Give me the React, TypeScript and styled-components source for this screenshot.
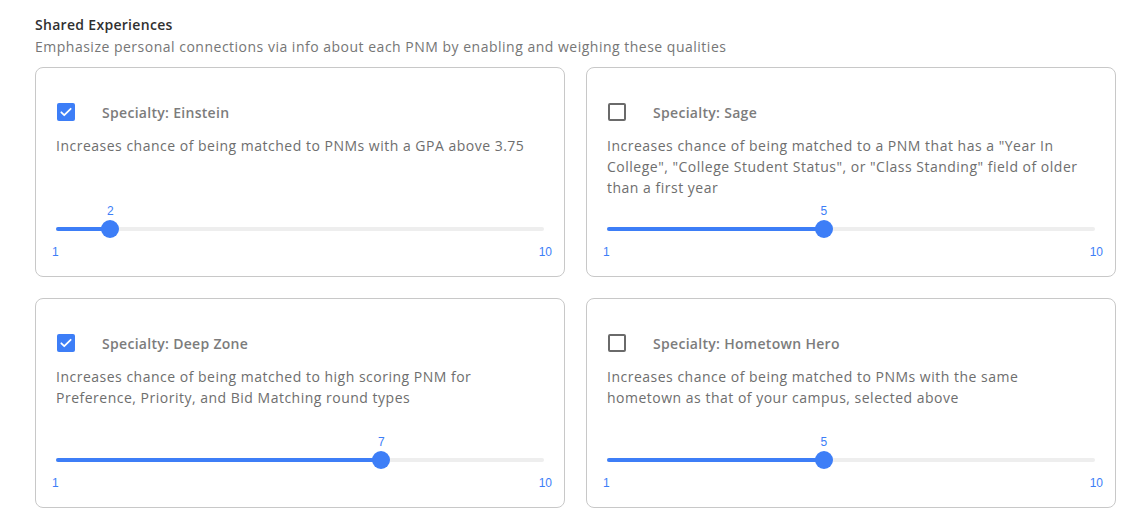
import React from "react";
import styled, { createGlobalStyle } from "styled-components";

const Global = createGlobalStyle`
  html, body { margin: 0; padding: 0; background: #fff; }
  body { font-family: "Open Sans", "Noto Sans", sans-serif; letter-spacing: 0.5px; }
`;

const BLUE = "#3d7ef7";

const Page = styled.div`
  padding: 14px 15px 0 35px;
`;

const Title = styled.div`
  font-size: 14px;
  line-height: 21px;
  font-weight: 600;
  letter-spacing: 0.3px;
  color: #303030;
`;

const Subtitle = styled.div`
  font-size: 14px;
  line-height: 21px;
  color: #767676;
  margin-top: 1px;
`;

const Grid = styled.div`
  display: grid;
  grid-template-columns: 1fr 1fr;
  gap: 21px;
  margin-top: 10px;
`;

const Card = styled.div`
  box-sizing: border-box;
  height: 210px;
  border: 1px solid #c8c8c8;
  border-radius: 8px;
  padding: 0 20px 17px 20px;
  display: flex;
  flex-direction: column;
`;

const Header = styled.div`
  display: flex;
  align-items: center;
  margin-top: 35px;
  height: 18px;
  gap: 27px;
`;

const Box = styled.div<{ $checked: boolean }>`
  box-sizing: border-box;
  width: 18px;
  height: 18px;
  margin-left: 1px;
  border-radius: 2px;
  display: flex;
  align-items: center;
  justify-content: center;
  background: ${(p) => (p.$checked ? BLUE : "#fff")};
  border: ${(p) => (p.$checked ? "none" : "2px solid #6a6a6a")};
`;

const Label = styled.div`
  font-size: 14px;
  font-weight: 600;
  letter-spacing: 0.3px;
  color: #7c7c7c;
`;

const Desc = styled.div`
  margin-top: 14px;
  font-size: 14px;
  line-height: 21px;
  color: #6e6e6e;
`;

const SliderWrap = styled.div`
  margin-top: auto;
`;

const TrackArea = styled.div`
  position: relative;
  padding-top: 25px;
`;

const Track = styled.div`
  height: 4px;
  border-radius: 2px;
  background: #eeeeee;
  position: relative;
`;

const Fill = styled.div`
  position: absolute;
  left: 0;
  top: 0;
  bottom: 0;
  border-radius: 2px;
  background: ${BLUE};
`;

const Thumb = styled.div`
  position: absolute;
  top: 50%;
  width: 18px;
  height: 18px;
  border-radius: 50%;
  background: ${BLUE};
  transform: translate(-50%, -50%);
`;

const ValueLabel = styled.div`
  position: absolute;
  top: 2px;
  font-family: "Liberation Sans", Arial, sans-serif;
  letter-spacing: 0;
  font-size: 12px;
  line-height: 14px;
  color: ${BLUE};
  transform: translateX(-50%);
`;

const Ends = styled.div`
  display: flex;
  justify-content: space-between;
  margin: 14px -8px 0 -4px;
  font-family: "Liberation Sans", Arial, sans-serif;
  letter-spacing: 0;
  font-size: 12px;
  line-height: 14px;
  color: ${BLUE};
`;

const Check = () => (
  <svg width="14" height="14" viewBox="0 0 24 24" fill="none">
    <path d="M4 12.5l5 5L20 6.5" stroke="#fff" strokeWidth="3" strokeLinecap="round" strokeLinejoin="round" />
  </svg>
);

type Item = { title: string; desc: string; checked: boolean; value: number };

const items: Item[] = [
  {
    title: "Specialty: Einstein",
    desc: "Increases chance of being matched to PNMs with a GPA above 3.75",
    checked: true,
    value: 2,
  },
  {
    title: "Specialty: Sage",
    desc: 'Increases chance of being matched to a PNM that has a "Year In College", "College Student Status", or "Class Standing" field of older than a first year',
    checked: false,
    value: 5,
  },
  {
    title: "Specialty: Deep Zone",
    desc: "Increases chance of being matched to high scoring PNM for Preference, Priority, and Bid Matching round types",
    checked: true,
    value: 7,
  },
  {
    title: "Specialty: Hometown Hero",
    desc: "Increases chance of being matched to PNMs with the same hometown as that of your campus, selected above",
    checked: false,
    value: 5,
  },
];

const Slider = ({ value }: { value: number }) => {
  const pct = ((value - 1) / 9) * 100;
  return (
    <SliderWrap>
      <TrackArea>
        <ValueLabel style={{ left: `${pct}%` }}>{value}</ValueLabel>
        <Track>
          <Fill style={{ width: `${pct}%` }} />
          <Thumb style={{ left: `${pct}%` }} />
        </Track>
      </TrackArea>
      <Ends>
        <span>1</span>
        <span>10</span>
      </Ends>
    </SliderWrap>
  );
};

export default function App() {
  return (
    <Page>
      <Global />
      <Title>Shared Experiences</Title>
      <Subtitle>
        Emphasize personal connections via info about each PNM by enabling and weighing these qualities
      </Subtitle>
      <Grid>
        {items.map((it) => (
          <Card key={it.title}>
            <Header>
              <Box $checked={it.checked}>{it.checked && <Check />}</Box>
              <Label>{it.title}</Label>
            </Header>
            <Desc>{it.desc}</Desc>
            <Slider value={it.value} />
          </Card>
        ))}
      </Grid>
    </Page>
  );
}
